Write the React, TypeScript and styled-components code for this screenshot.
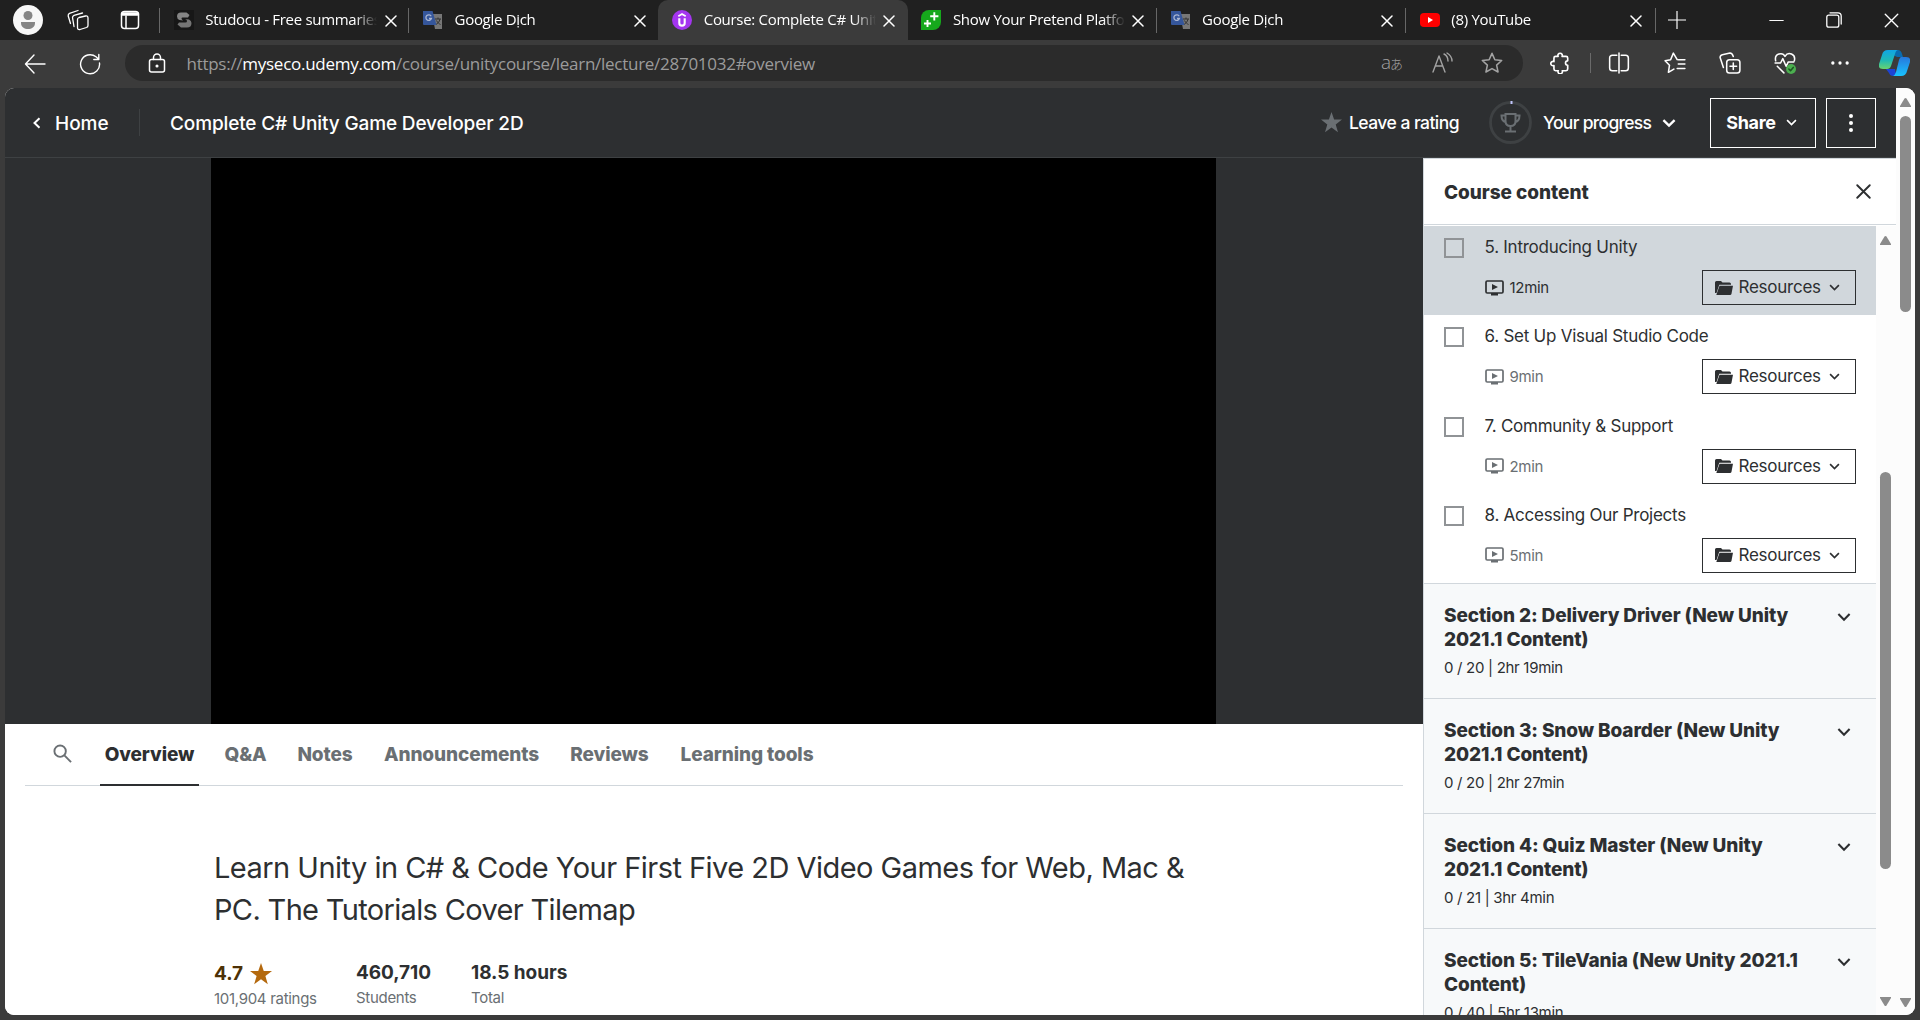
import React from 'react';
import styled, { createGlobalStyle } from 'styled-components';

const ui = `"Open Sans", "Noto Sans", "Noto Sans CJK JP", sans-serif`;
const site = `Inter, "Liberation Sans", sans-serif`;

const Global = createGlobalStyle`
  * { box-sizing: border-box; }
  body { margin: 0; overflow: hidden; background: #3b3b3b; }
  button { font: inherit; color: inherit; background: none; border: 0; padding: 0; margin: 0; }
  h1, h2, h3, p { margin: 0; font: inherit; }
  svg { display: block; flex: none; }
`;

const Window = styled.div`
  width: 1920px; height: 1020px; display: flex; flex-direction: column;
  background: #3b3b3b; overflow: hidden; color: #fff; font-family: ${ui};
`;

/* ---------- tab strip ---------- */
const TabStrip = styled.div`
  height: 40px; flex: none; display: flex; align-items: center; background: #202020;
`;
const Launchers = styled.div`
  width: 160px; flex: none; display: flex; align-items: center; padding-left: 13px;
  svg + svg { margin-left: 31px; }
`;
const Avatar = styled.div`
  width: 30px; height: 30px; border-radius: 50%; background: #f7f7f7; display: grid; place-items: center; margin-right: 24px;
`;
const TabBox = styled.div<{ $active?: boolean; $sep?: boolean }>`
  width: 249.2px; height: 40px; display: flex; align-items: center; padding: 0 10px 0 14px;
  border-radius: 10px 10px 0 0; background: ${p => (p.$active ? '#3b3b3b' : 'transparent')};
  &::before {
    content: ''; width: 1px; height: 25px; margin-right: -1px; transform: translateX(-15px);
    background: ${p => (p.$sep ? '#676767' : 'transparent')};
  }
`;
const Favicon = styled.div`width: 20px; height: 20px; flex: none; margin-right: 11.5px;`;
const TabTitle = styled.div`
  width: 172px; flex: none; font-size: 15px; line-height: 24px; white-space: nowrap; overflow: hidden;
  letter-spacing: -0.3px; margin-top: -2px;
  mask-image: linear-gradient(90deg, #000 150px, transparent 172px);
`;
const TabClose = styled.button`width: 20px; height: 20px; margin-left: 4.5px; margin-top: 2px; display: grid; place-items: center;`;
const EndSep = styled.div`width: 1px; height: 25px; background: #676767; margin-right: 12px;`;
const WindowButtons = styled.div`
  flex: 1; display: flex; justify-content: flex-end; align-items: center; padding-right: 21px; gap: 42px;
`;

/* ---------- address bar ---------- */
const Toolbar = styled.div`
  height: 48px; flex: none; display: flex; align-items: center; padding: 0 0 0 24px;
`;
const NavIcons = styled.div`display: flex; flex: none; gap: 33px; width: 101px; align-items: center;`;
const Address = styled.div`
  width: 1398px; flex: none; height: 36px; border-radius: 18px; background: #2b2b2b; display: flex; align-items: center;
  padding: 0 20px 0 22px; margin-top: -2px;
`;
const Url = styled.div`
  flex: 1; margin-left: 19.5px; padding-top: 1px; font-size: 17px; line-height: 26px; letter-spacing: -0.27px; color: #9b9b9b; white-space: nowrap;
  b { font-weight: 400; color: #fff; }
`;
const AddressActions = styled.div`display: flex; align-items: center; gap: 28px; color: #a3a3a3;`;
const Glyph = styled.span`
  font-size: 19px; line-height: 22px; white-space: nowrap; font-weight: 300;
  small { font-size: 13px; margin-left: -1px; }
`;
const BarIcons = styled.div`flex: 1; display: flex; align-items: center; gap: 33.3px; padding-left: 26px; margin-top: -2px;`;
const BarSep = styled.div`width: 1px; height: 20px; flex: none; background: #6a6a6a; margin: 0 -16px 0 -14.3px;`;
const CopilotSlot = styled.div`margin-left: -6px;`;

/* ---------- page ---------- */
const Page = styled.div`
  margin-left: 5px; width: 1910px; height: 927px; flex: none; display: flex; border-radius: 9px; overflow: hidden;
  background: #fff; font-family: ${site}; color: #2d2f31;
`;
const Document = styled.div`width: 1891px; display: flex; flex-direction: column;`;
const CourseHeader = styled.header`
  height: 70px; flex: none; display: flex; align-items: center; background: #2d2f31; color: #fff;
  border-bottom: 1px solid #3e4143; padding: 0 20px 0 26px; font-weight: 500;
`;
const Label = styled.span<{ $size?: number; $spacing?: number; $weight?: number; $drop?: number }>`
  font-size: ${p => p.$size ?? 18}px; letter-spacing: ${p => p.$spacing ?? 0}px; font-weight: ${p => p.$weight ?? 500};
  white-space: nowrap; padding-top: ${p => p.$drop ?? 0}px;
`;
const HomeLink = styled.a`display: flex; align-items: center; gap: 12px; width: 108px;`;
const Divider = styled.div`width: 1px; height: 27px; background: #3e4143; margin-right: 30px;`;
const CourseTitle = styled.h1`flex: 1; display: flex;`;
const RatingLink = styled.a`display: flex; align-items: center; gap: 7px; width: 168px;`;
const Progress = styled.div`
  display: flex; align-items: center; width: 211px;
  > svg { margin-left: 11px; }
`;
const Ring = styled.div`margin-right: 11px;`;
const Outlined = styled.button<{ $w: number }>`
  width: ${p => p.$w}px; height: 50px; border: 1px solid #fff; display: flex; align-items: center; justify-content: center;
  gap: 10px; margin-left: 10px; padding-right: ${p => (p.$w > 60 ? 3 : 0)}px;
`;

const Body = styled.div`flex: 1; min-height: 0; display: flex;`;
const Main = styled.main`width: 1418px; display: flex; flex-direction: column; background: #fff;`;
const Stage = styled.div`height: 566px; flex: none; background: #2d2f31; display: flex; padding-left: 206px;`;
const Video = styled.div`width: 1005px; background: #000;`;
const Nav = styled.nav`
  height: 62px; flex: none; margin: 0 20px; padding-left: 28px; display: flex; align-items: stretch;
  border-bottom: 1px solid #d1d7dc;
`;
const SearchButton = styled.button`width: 47px; display: flex; align-items: center; padding-bottom: 3px; color: #6a6f73;`;
const NavTab = styled.button<{ $w: number; $active?: boolean }>`
  width: ${p => p.$w}px; margin-bottom: -1px; font-size: 19px; font-weight: 800; letter-spacing: -0.1px;
  white-space: nowrap; color: ${p => (p.$active ? '#2d2f31' : '#6a6f73')}; display: flex; justify-content: center; align-items: center;
  border-bottom: 2px solid ${p => (p.$active ? '#2d2f31' : 'transparent')};
`;
const Overview = styled.section`padding: 61px 0 0 209px;`;
const Headline = styled.h2`font-size: 29px; line-height: 42px; white-space: nowrap;`;
const Line = styled.span<{ $spacing: number }>`display: block; letter-spacing: ${p => p.$spacing}px;`;
const Stats = styled.div`display: flex; margin-top: 27px;`;
const Stat = styled.div<{ $w: number }>`width: ${p => p.$w}px;`;
const StatValue = styled.div<{ $gold?: boolean }>`
  height: 28px; display: flex; align-items: center; gap: 7px; font-size: 19px; font-weight: 750;
  letter-spacing: -0.05px; color: ${p => (p.$gold ? '#4d3105' : '#2d2f31')};
  padding-top: ${p => (p.$gold ? 3 : 0)}px; white-space: nowrap;
`;
const StatLabel = styled.div<{ $drop?: boolean }>`
  font-size: 15px; line-height: 22px; color: #6a6f73; letter-spacing: -0.3px; padding-top: ${p => (p.$drop ? 2 : 1)}px;
`;

/* ---------- course content ---------- */
const Sidebar = styled.aside`
  width: 473px; display: flex; flex-direction: column; border-left: 1px solid #d1d7dc; border-top: 1px solid #d1d7dc; background: #fff;
`;
const SidebarHead = styled.div`
  height: 66px; flex: none; border-bottom: 1px solid #d1d7dc; display: flex; align-items: center; justify-content: space-between;
  padding: 0 25px 0 20px;
`;
const ScrollArea = styled.div`flex: 1; min-height: 0; display: flex; padding-top: 1px;`;
const Items = styled.div`width: 452px; overflow: hidden;`;
const Lecture = styled.div<{ $current?: boolean }>`
  height: 89.25px; display: flex; padding: 12px 20px 0 20px; background: ${p => (p.$current ? '#d1d7dc' : '#fff')};
`;
const Check = styled.div`width: 20px; height: 20px; flex: none; border: 2px solid #909396; margin-right: 20.5px;`;
const LectureInfo = styled.div`flex: 1;`;
const LectureTitle = styled.div`
  font-size: 17px; line-height: 19px; height: 32px; letter-spacing: -0.25px; white-space: nowrap;
`;
const LectureMeta = styled.div`display: flex; align-items: center; justify-content: space-between;`;
const Duration = styled.div<{ $current?: boolean }>`
  display: flex; align-items: center; gap: 6px; font-size: 15px; letter-spacing: -0.3px; color: ${p => (p.$current ? '#2d2f31' : '#6a6f73')};
`;
const Resources = styled.button`
  width: 154px; height: 35px; border: 1px solid #2d2f31; display: flex; align-items: center; padding: 0 15px 0 11.5px;
`;
const ResourceLabel = styled.span`font-size: 17px; letter-spacing: -0.25px; margin: -1px 0 0 6px; flex: 1; text-align: left;`;
const SectionBox = styled.div`
  height: 115px; border-top: 1px solid #d1d7dc; background: #f7f9fa; display: flex; justify-content: space-between; padding: 20px 25px 0 20px;
`;
const SectionTitle = styled.h3`
  font-size: 19px; line-height: 24px; font-weight: 800; white-space: nowrap; letter-spacing: -0.12px;
`;
const SectionMeta = styled.div`font-size: 15px; line-height: 20px; margin-top: 6px; letter-spacing: -0.3px;`;
const SectionToggle = styled.button`height: 14px; margin-top: 6px;`;

/* ---------- scrollbars ---------- */
const Track = styled.div<{ $w: number; $top: number; $bottom?: number }>`
  width: ${p => p.$w}px; flex: none; background: #fcfcfc; display: flex; flex-direction: column; align-items: flex-start;
  padding: ${p => p.$top}px 0 ${p => p.$bottom ?? 8}px 4px;
`;
const Thumb = styled.div<{ $h: number; $gap: number }>`
  width: 11px; height: ${p => p.$h}px; border-radius: 6px; background: #8b8b8b; margin-top: ${p => p.$gap}px; margin-bottom: auto;
`;

/* ---------- drawings ---------- */
type IconProps = { s?: number; w?: number; children: React.ReactNode; box?: number };
const Icon = ({ s = 20, w = 1.4, box = 20, children }: IconProps) => (
  <svg width={s} height={s} viewBox={`0 0 ${box} ${box}`} fill="none" stroke="currentColor" strokeWidth={w} strokeLinecap="round" strokeLinejoin="round">
    {children}
  </svg>
);
const Chevron = ({ s = 12, w = 2 }: { s?: number; w?: number }) => (
  <Icon s={s} box={12} w={w}><path d="M1.2 3.5 6 8.3 10.8 3.5" strokeLinecap="butt" strokeLinejoin="miter" /></Icon>
);
const Cross = ({ s = 12, w = 1.5 }: { s?: number; w?: number }) => (
  <Icon s={s} box={12} w={w}><path d="M1 1 11 11M11 1 1 11" /></Icon>
);
const Triangle = ({ up }: { up?: boolean }) => (
  <svg width="11" height="9" viewBox="0 0 11 9" fill="#8b8b8b"><path d={up ? 'M4.5 .5Q5.5-.5 6.5.5L11 8v1H0V8Z' : 'M4.5 8.5Q5.5 9.5 6.5 8.5L11 1V0H0v1Z'} /></svg>
);
const Star = ({ s = 20, color }: { s?: number; color: string }) => (
  <svg width={s} height={s} viewBox="0 0 20 20" fill={color}><path d="M10 0 12.5 7.2H20L14 11.8 16.2 19.3 10 14.8 3.8 19.3 6 11.8 0 7.2H7.5Z" /></svg>
);
const starPath = 'M10 1.2 12.6 7 18.8 7.7 14.2 11.9 15.5 18.2 10 15.1 4.5 18.2 5.8 11.9 1.2 7.7 7.4 7Z';

const TranslateIcon = () => (
  <svg width="20" height="20" viewBox="0 0 20 20">
    <path d="M9 4h10v15H12z" fill="#777" />
    <path d="M12 9h6M15 7.5V9M17 9c-.5 3-2.5 4.5-4 5.5M13.5 10.5c1 2 2.5 3.3 4 4" stroke="#333" fill="none" />
    <path d="M0 1h9.5l4 14H1a1 1 0 0 1-1-1Z" fill="#35569b" />
    <path d="M8.2 6.3A2.8 2.8 0 1 0 8.4 8.5H6" stroke="#aab6d2" strokeWidth="1.3" fill="none" />
  </svg>
);
const StudocuIcon = () => (
  <svg width="20" height="20" viewBox="0 0 20 20">
    <path d="M0 0h20v20H0z" fill="#171717" />
    <path d="M3 6.500Q3 2.500 7 2.500h5.500L15.500 5 14 7.500H8.500Q7.500 7.500 7.500 8.500T9 10.500L5.500 10Q3 9 3 6.500Z" fill="#858585" />
    <path d="M17.500 13Q17.500 17.500 13 17.500H7L3.500 14.500 5 12.500h6.500Q13 12.500 13 11T11 9l4 .5Q17.500 10.500 17.500 13Z" fill="#757575" />
  </svg>
);
const UdemyIcon = () => (
  <svg width="20" height="20" viewBox="0 0 20 20">
    <circle cx="10" cy="10" r="10" fill="#a435f0" />
    <path d="M6.300 6.300 10 4 13.700 6.300" fill="none" stroke="#fff" strokeWidth="1.700" />
    <path d="M7.300 8.300v4.600a2.700 2.700 0 0 0 5.400 0V8.300" fill="none" stroke="#fff" strokeWidth="2.100" />
  </svg>
);
const PlusLeafIcon = () => (
  <svg width="20" height="20" viewBox="0 0 20 20">
    <path d="M8 0h12v12a8 8 0 0 1-8 8H0V8a8 8 0 0 1 8-8Z" fill="#16a81c" />
    <path d="M13.300 2.200v8.200M9.200 6.300h8.200M6.500 10v7M3 13.500h7" stroke="#fff" strokeWidth="1.900" />
  </svg>
);
const YouTubeIcon = () => (
  <svg width="20" height="20" viewBox="0 0 20 20"><rect y="3" width="20" height="14" rx="4" fill="#f00" /><path d="m8 7 5 3-5 3Z" fill="#fff" /></svg>
);
const CopilotIcon = () => (
  <svg width="31" height="28" viewBox="0 0 31 28">
    <defs>
      <linearGradient id="cpA" x1="0" y1="0" x2="0" y2="1"><stop stopColor="#10a5e6" /><stop offset=".55" stopColor="#20b9b4" /><stop offset="1" stopColor="#68d36e" /></linearGradient>
      <linearGradient id="cpB" x1="0" y1="0" x2="0" y2="1"><stop stopColor="#2777dc" /><stop offset="1" stopColor="#18c3ff" /></linearGradient>
    </defs>
    <path d="M15 1h4q3 0 4 4l1 3h-6L14 6Z" fill="#096bb0" />
    <path d="M7 20h9l1 5q-1 2-3 2-3 0-4-3Z" fill="#1d43d4" />
    <path d="M9 1h10q-2 0-3 4l-4 12q-1 3-4 3H4q-5 0-4-5L3 6q1-5 6-5Z" fill="url(#cpA)" />
    <path d="M22 8h5q5 0 4 5l-3 9q-1 5-6 5h-8q2-1 3-4l3-12q1-3 2-3Z" fill="url(#cpB)" />
  </svg>
);
const VideoIcon = () => (
  <svg width="19" height="16" viewBox="0 0 19 16" fill="currentColor">
    <rect x="1" y="1" width="17" height="12" rx="1.200" fill="none" stroke="currentColor" strokeWidth="1.700" />
    <path d="m7 4 6 3-6 3ZM6 13h7v2.500H6z" />
  </svg>
);
const FolderIcon = () => (
  <svg width="18" height="14" viewBox="0 0 18 14" fill="#2d2f31"><path d="M0 12V1.500Q0 0 1.500 0H6l1.500 1.500h7Q16 1.500 16 3v.7H4.300L1.500 12Z" /><path d="M4.500 4.700H18l-1.500 8q-.3 1.300-1.500 1.300H1.300Z" /></svg>
);
const TrophyRing = () => (
  <svg width="43" height="43" viewBox="0 0 43 43" fill="none">
    <circle cx="21.500" cy="21.500" r="20" stroke="#3e4143" strokeWidth="2.800" />
    <path d="M22.500 0v3" stroke="#c0c4fc" strokeWidth="2" />
    <g stroke="#6a6f73" strokeWidth="2"><path d="M16.500 13h10v7q0 5-5 5t-5-5ZM16.500 14.500h-4q0 6 5 7M26.500 14.500h4q0 6-5 7M21.500 25v5M16 30.500h11" /></g>
  </svg>
);

/* ---------- data ---------- */
const tabs = [
  { title: 'Studocu - Free summaries', icon: <StudocuIcon />, sep: true },
  { title: 'Google Dịch', icon: <TranslateIcon />, sep: true },
  { title: 'Course: Complete C# Unity', icon: <UdemyIcon />, active: true },
  { title: 'Show Your Pretend Platfo', icon: <PlusLeafIcon /> },
  { title: 'Google Dịch', icon: <TranslateIcon />, sep: true },
  { title: '(8) YouTube', icon: <YouTubeIcon />, sep: true },
];
const lectures = [
  { title: '5. Introducing Unity', time: '12min', current: true },
  { title: '6. Set Up Visual Studio Code', time: '9min' },
  { title: '7. Community & Support', time: '2min' },
  { title: '8. Accessing Our Projects', time: '5min' },
];
const sections = [
  { lines: ['Section 2: Delivery Driver (New Unity', '2021.1 Content)'], meta: '0 / 20 | 2hr 19min' },
  { lines: ['Section 3: Snow Boarder (New Unity', '2021.1 Content)'], meta: '0 / 20 | 2hr 27min' },
  { lines: ['Section 4: Quiz Master (New Unity', '2021.1 Content)'], meta: '0 / 21 | 3hr 4min' },
  { lines: ['Section 5: TileVania (New Unity 2021.1', 'Content)'], meta: '0 / 40 | 5hr 13min' },
];
const navTabs = [
  { title: 'Overview', w: 99, active: true },
  { title: 'Q&A', w: 93 },
  { title: 'Notes', w: 66 },
  { title: 'Announcements', w: 207 },
  { title: 'Reviews', w: 89 },
  { title: 'Learning tools', w: 186 },
];

export default function App() {
  return (
    <Window>
      <Global />
      <TabStrip>
        <Launchers>
          <Avatar><svg width="16" height="18" viewBox="0 0 16 18" fill="#858585"><circle cx="8" cy="4.500" r="4.500" /><path d="M1 11h14v1c0 8-14 8-14 0Z" /></svg></Avatar>
          <Icon s={22} w={1.300} box={22}><path d="M12 8.500 18.500 7Q21 6.500 21 9v7.500q0 1.500-1.500 2L13 20.500q-2.500.5-2.500-2V10.500Q10.500 9 12 8.500ZM7 17.500 5.500 8.500Q5.500 7 7 6.300L15.500 4M3.500 14.500 1.200 7q-.2-2 1.300-2.700L11 1.500" /></Icon>
          <Icon s={20} w={1.500}><rect x="1.500" y="1.500" width="17" height="17" rx="3" /><path d="M2.500 4h15" strokeWidth="3.500" /><path d="M6 6v12" /></Icon>
        </Launchers>
        {tabs.map((t, i) => (
          <TabBox key={i} $active={t.active} $sep={t.sep}>
            <Favicon>{t.icon}</Favicon>
            <TabTitle>{t.title}</TabTitle>
            <TabClose><Cross /></TabClose>
          </TabBox>
        ))}
        <EndSep />
        <Icon s={18} w={1.300}><path d="M10 0v20M0 10h20" /></Icon>
        <WindowButtons>
          <Icon s={15} w={1.300}><path d="M1 10h18" /></Icon>
          <Icon s={16} w={1.600}><rect x="1" y="4" width="15" height="15" rx="2.500" /><path d="M5 1h10q4 0 4 4v10" /></Icon>
          <Cross s={15} w={1.100} />
        </WindowButtons>
      </TabStrip>

      <Toolbar>
        <NavIcons>
          <Icon s={22} w={1.400} box={22}><path d="M21 11H2M10 2 1.500 11l8.500 9" /></Icon>
          <Icon s={22} w={1.400} box={22}><path d="M20.500 10A9.500 9.500 0 1 1 17 3.800L19.500 6M19.800 1.500V6.500h-5" /></Icon>
        </NavIcons>
        <Address>
          <Icon s={20} w={1.500}><rect x="2.500" y="6.500" width="15" height="12.500" rx="2" /><path d="M6.500 6.500V4.500a3.500 3.500 0 0 1 7 0v2" /><circle cx="10" cy="13" r=".8" fill="currentColor" /></Icon>
          <Url>https://<b>myseco.udemy.com</b>/course/unitycourse/learn/lecture/28701032#overview</Url>
          <AddressActions>
            <Glyph>a<small>あ</small></Glyph>
            <Icon s={22} w={1.400} box={22}><path d="M2 20 8 4l6 16M4.500 14h7M13 2q4 2 4 7M16 1q5 3 5 8" /></Icon>
            <Icon s={22}><path d={starPath} /></Icon>
          </AddressActions>
        </Address>
        <BarIcons>
          <Icon s={22} w={1.500}><path d="M6 4h2.300a2 2 0 1 1 3.600 0H15.500Q17 4 17 5.500V8a2 2 0 1 0 0 4v3.500Q17 17 15.500 17H12a2 2 0 1 1-3.600 0H6Q4.500 17 4.500 15.500V12.300a2 2 0 1 1 0-3.600V5.500Q4.500 4 6 4Z" /></Icon>
          <BarSep />
          <Icon s={22}><path d="M8 3H4Q1.500 3 1.500 5.500v9q0 2.500 2.500 2.500h4M12 3h4q2.500 0 2.500 2.500v9q0 2.500-2.500 2.500h-4M10 1v18" /></Icon>
          <Icon s={22}><path d="M12 7 8.500 1 6 7 1 8l4 4-1 6.500 5-3M13 7h6M13 11h6M12 15h7" /></Icon>
          <Icon s={22}><rect x="7" y="7" width="12" height="12" rx="2.500" /><path d="M13 10v6M10 13h6M4 14 1 5q0-2 2-2.500l7-1.500q2 0 3 3" /></Icon>
          <Icon s={22}><path d="M1.500 8C0 1 8 0 10 4c3-5 10-2 8.500 4M1 10h5l2-4 3 7 2-4h5M3 13l6 6" /><circle cx="15.500" cy="15.500" r="4.500" fill="#4caf50" stroke="none" /><path d="m13.500 15.500 1.500 1.500 2.500-3" stroke="#1d5520" /></Icon>
          <Icon s={22} w={0}><g fill="#fff"><circle cx="3.500" cy="10" r="1.500" /><circle cx="10" cy="10" r="1.500" /><circle cx="16.500" cy="10" r="1.500" /></g></Icon>
          <CopilotSlot><CopilotIcon /></CopilotSlot>
        </BarIcons>
      </Toolbar>

      <Page>
        <Document>
          <CourseHeader>
            <HomeLink><Icon s={12} box={12} w={2}><path d="M8.500 1.200 3.500 6 8.500 10.800" strokeLinecap="butt" strokeLinejoin="miter" /></Icon><Label $size={19} $spacing={0} $drop={2}>Home</Label></HomeLink>
            <Divider />
            <CourseTitle><Label $size={19} $spacing={-0.130} $drop={2}>Complete C# Unity Game Developer 2D</Label></CourseTitle>
            <RatingLink><Star color="#6a6f73" s={21} /><Label $size={17.500} $spacing={-0.550}>Leave a rating</Label></RatingLink>
            <Progress>
              <Ring><TrophyRing /></Ring>
              <Label $size={17.500} $spacing={-0.700}>Your progress</Label>
              <Chevron s={14} />
            </Progress>
            <Outlined $w={106}><Label $size={18} $weight={700} $spacing={-0.300}>Share</Label><Chevron s={11} w={1.800} /></Outlined>
            <Outlined $w={50}><svg width="4" height="18" viewBox="0 0 4 18" fill="#fff"><circle cx="2" cy="2" r="2" /><circle cx="2" cy="9" r="2" /><circle cx="2" cy="16" r="2" /></svg></Outlined>
          </CourseHeader>
          <Body>
            <Main>
              <Stage><Video /></Stage>
              <Nav>
                <SearchButton><Icon s={19} w={2}><circle cx="7.500" cy="7.500" r="6" /><path d="m12 12 7 7" strokeLinecap="butt" /></Icon></SearchButton>
                {navTabs.map(t => <NavTab key={t.title} $w={t.w} $active={t.active}>{t.title}</NavTab>)}
              </Nav>
              <Overview>
                <Headline>
                  <Line $spacing={-0.530}>Learn Unity in C# &amp; Code Your First Five 2D Video Games for Web, Mac &amp;</Line>
                  <Line $spacing={-0.660}>PC. The Tutorials Cover Tilemap</Line>
                </Headline>
                <Stats>
                  <Stat $w={142}><StatValue $gold>4.7 <Star color="#b4690e" s={22} /></StatValue><StatLabel $drop>101,904 ratings</StatLabel></Stat>
                  <Stat $w={115}><StatValue>460,710</StatValue><StatLabel>Students</StatLabel></Stat>
                  <Stat $w={120}><StatValue>18.5 hours</StatValue><StatLabel>Total</StatLabel></Stat>
                </Stats>
              </Overview>
            </Main>
            <Sidebar>
              <SidebarHead><Label $size={19} $weight={800} $spacing={-0.050} $drop={1}>Course content</Label><Cross s={15} w={1.500} /></SidebarHead>
              <ScrollArea>
                <Items>
                  {lectures.map(l => (
                    <Lecture key={l.title} $current={l.current}>
                      <Check />
                      <LectureInfo>
                        <LectureTitle>{l.title}</LectureTitle>
                        <LectureMeta>
                          <Duration $current={l.current}><VideoIcon />{l.time}</Duration>
                          <Resources><FolderIcon /><ResourceLabel>Resources</ResourceLabel><Chevron s={11} w={1.800} /></Resources>
                        </LectureMeta>
                      </LectureInfo>
                    </Lecture>
                  ))}
                  {sections.map(s => (
                    <SectionBox key={s.meta}>
                      <div>
                        <SectionTitle>{s.lines[0]}<br />{s.lines[1]}</SectionTitle>
                        <SectionMeta>{s.meta}</SectionMeta>
                      </div>
                      <SectionToggle><Chevron s={14} w={1.800} /></SectionToggle>
                    </SectionBox>
                  ))}
                </Items>
                <Track $w={20} $top={10} $bottom={9}><Triangle up /><Thumb $h={397} $gap={227} /><Triangle /></Track>
              </ScrollArea>
            </Sidebar>
          </Body>
        </Document>
        <Track $w={19} $top={10}><Triangle up /><Thumb $h={196} $gap={9} /><Triangle /></Track>
      </Page>
    </Window>
  );
}
